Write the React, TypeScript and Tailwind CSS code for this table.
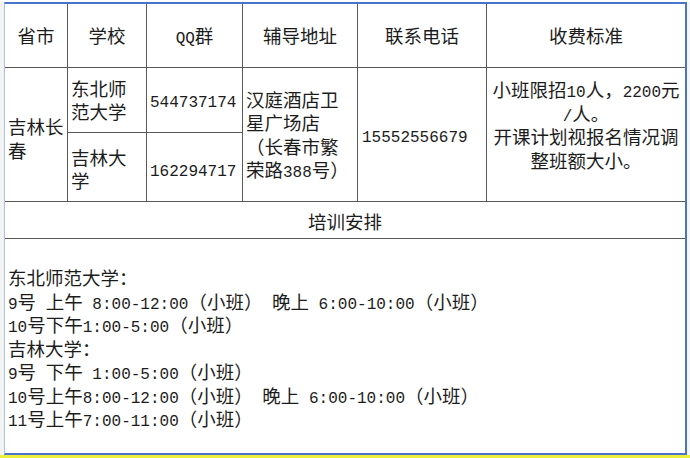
import { Fragment, ReactNode } from 'react'

// half-width runs use a mono font so digits keep the spreadsheet's even spacing
function T({ children }: { children: string }) {
  const parts = children.split(/([\x20-\x7e]+)/)
  return (
    <>
      {parts.map((part, i) =>
        /^[\x20-\x7e]+$/.test(part) ? (
          <span
            key={i}
            className="font-['Liberation_Mono'] text-[16px] leading-none whitespace-pre"
          >
            {part}
          </span>
        ) : (
          <Fragment key={i}>{part}</Fragment>
        )
      )}
    </>
  )
}

function Lines({ lines }: { lines: string[] }) {
  return (
    <div className="flex flex-col">
      {lines.map((line) => (
        <div key={line} className="h-[23.5px] whitespace-nowrap">
          <T>{line}</T>
        </div>
      ))}
    </div>
  )
}

function Cell({
  children,
  className = '',
}: {
  children?: ReactNode
  className?: string
}) {
  return (
    <div className={`flex border-r border-b border-[#595959] ${className}`}>
      {children}
    </div>
  )
}

const schedule = [
  '东北师范大学：',
  '9号 上午 8:00-12:00（小班） 晚上 6:00-10:00（小班）',
  '10号下午1:00-5:00（小班）',
  '吉林大学：',
  '9号 下午 1:00-5:00（小班）',
  '10号上午8:00-12:00（小班） 晚上 6:00-10:00（小班）',
  '11号上午7:00-11:00（小班）',
]

export default function App() {
  return (
    <div className="flex flex-col w-[690px] h-[458px] bg-white overflow-hidden font-['Noto_Sans_CJK_SC',sans-serif] text-[18.5px] leading-[23.5px] text-[#1c1c1c]">
      <div className="h-[2px] shrink-0" />
      <div className="flex flex-1">
        <div className="w-[4px] shrink-0 bg-[#f3f3f3]" />
        <div className="flex-1 border-l border-l-[#a9c1ea] border-t-2 border-r-2 border-b-2 border-t-[#4a74cc] border-r-[#4a74cc] border-b-[#4a74cc]">
          <div className="grid grid-cols-[63px_79px_96px_115px_129px_198px] grid-rows-[64px_65px_69px_37px_214px]">
            <Cell className="items-center justify-center">省市</Cell>
            <Cell className="items-center justify-center">学校</Cell>
            <Cell className="items-center justify-center">
              <Lines lines={['QQ群']} />
            </Cell>
            <Cell className="items-center justify-center">辅导地址</Cell>
            <Cell className="items-center justify-center">联系电话</Cell>
            <Cell className="items-center justify-center border-r-0">收费标准</Cell>

            <Cell className="row-span-2 items-center pl-[3px] pt-[8px]">
              <Lines lines={['吉林长', '春']} />
            </Cell>
            <Cell className="items-center pl-[3px]">
              <Lines lines={['东北师', '范大学']} />
            </Cell>
            <Cell className="items-center pl-[3px]">
              <Lines lines={['544737174']} />
            </Cell>
            <Cell className="row-span-2 items-center pl-[3px]">
              <Lines lines={['汉庭酒店卫', '星广场店', '（长春市繁', '荣路388号）']} />
            </Cell>
            <Cell className="row-span-2 items-center pl-[4px]">
              <Lines lines={['15552556679']} />
            </Cell>
            <Cell className="row-span-2 flex-col items-center pt-[10px] border-r-0 text-center">
              <Lines
                lines={['小班限招10人，2200元', '/人。', '开课计划视报名情况调', '整班额大小。']}
              />
            </Cell>

            <Cell className="items-center pl-[3px] pt-[4px]">
              <Lines lines={['吉林大', '学']} />
            </Cell>
            <Cell className="items-center pl-[3px] pt-[4px]">
              <Lines lines={['162294717']} />
            </Cell>

            <Cell className="col-span-6 items-center justify-center pt-[3px] border-r-0">
              培训安排
            </Cell>

            <Cell className="col-span-6 flex-col pl-[3px] pt-[27px] border-r-0 border-b-0">
              <Lines lines={schedule} />
            </Cell>
          </div>
        </div>
        <div className="w-[3px] shrink-0 bg-[#f4f6fb]" />
      </div>
      <div className="h-[3px] shrink-0 bg-[#eaf03c]" />
    </div>
  )
}
